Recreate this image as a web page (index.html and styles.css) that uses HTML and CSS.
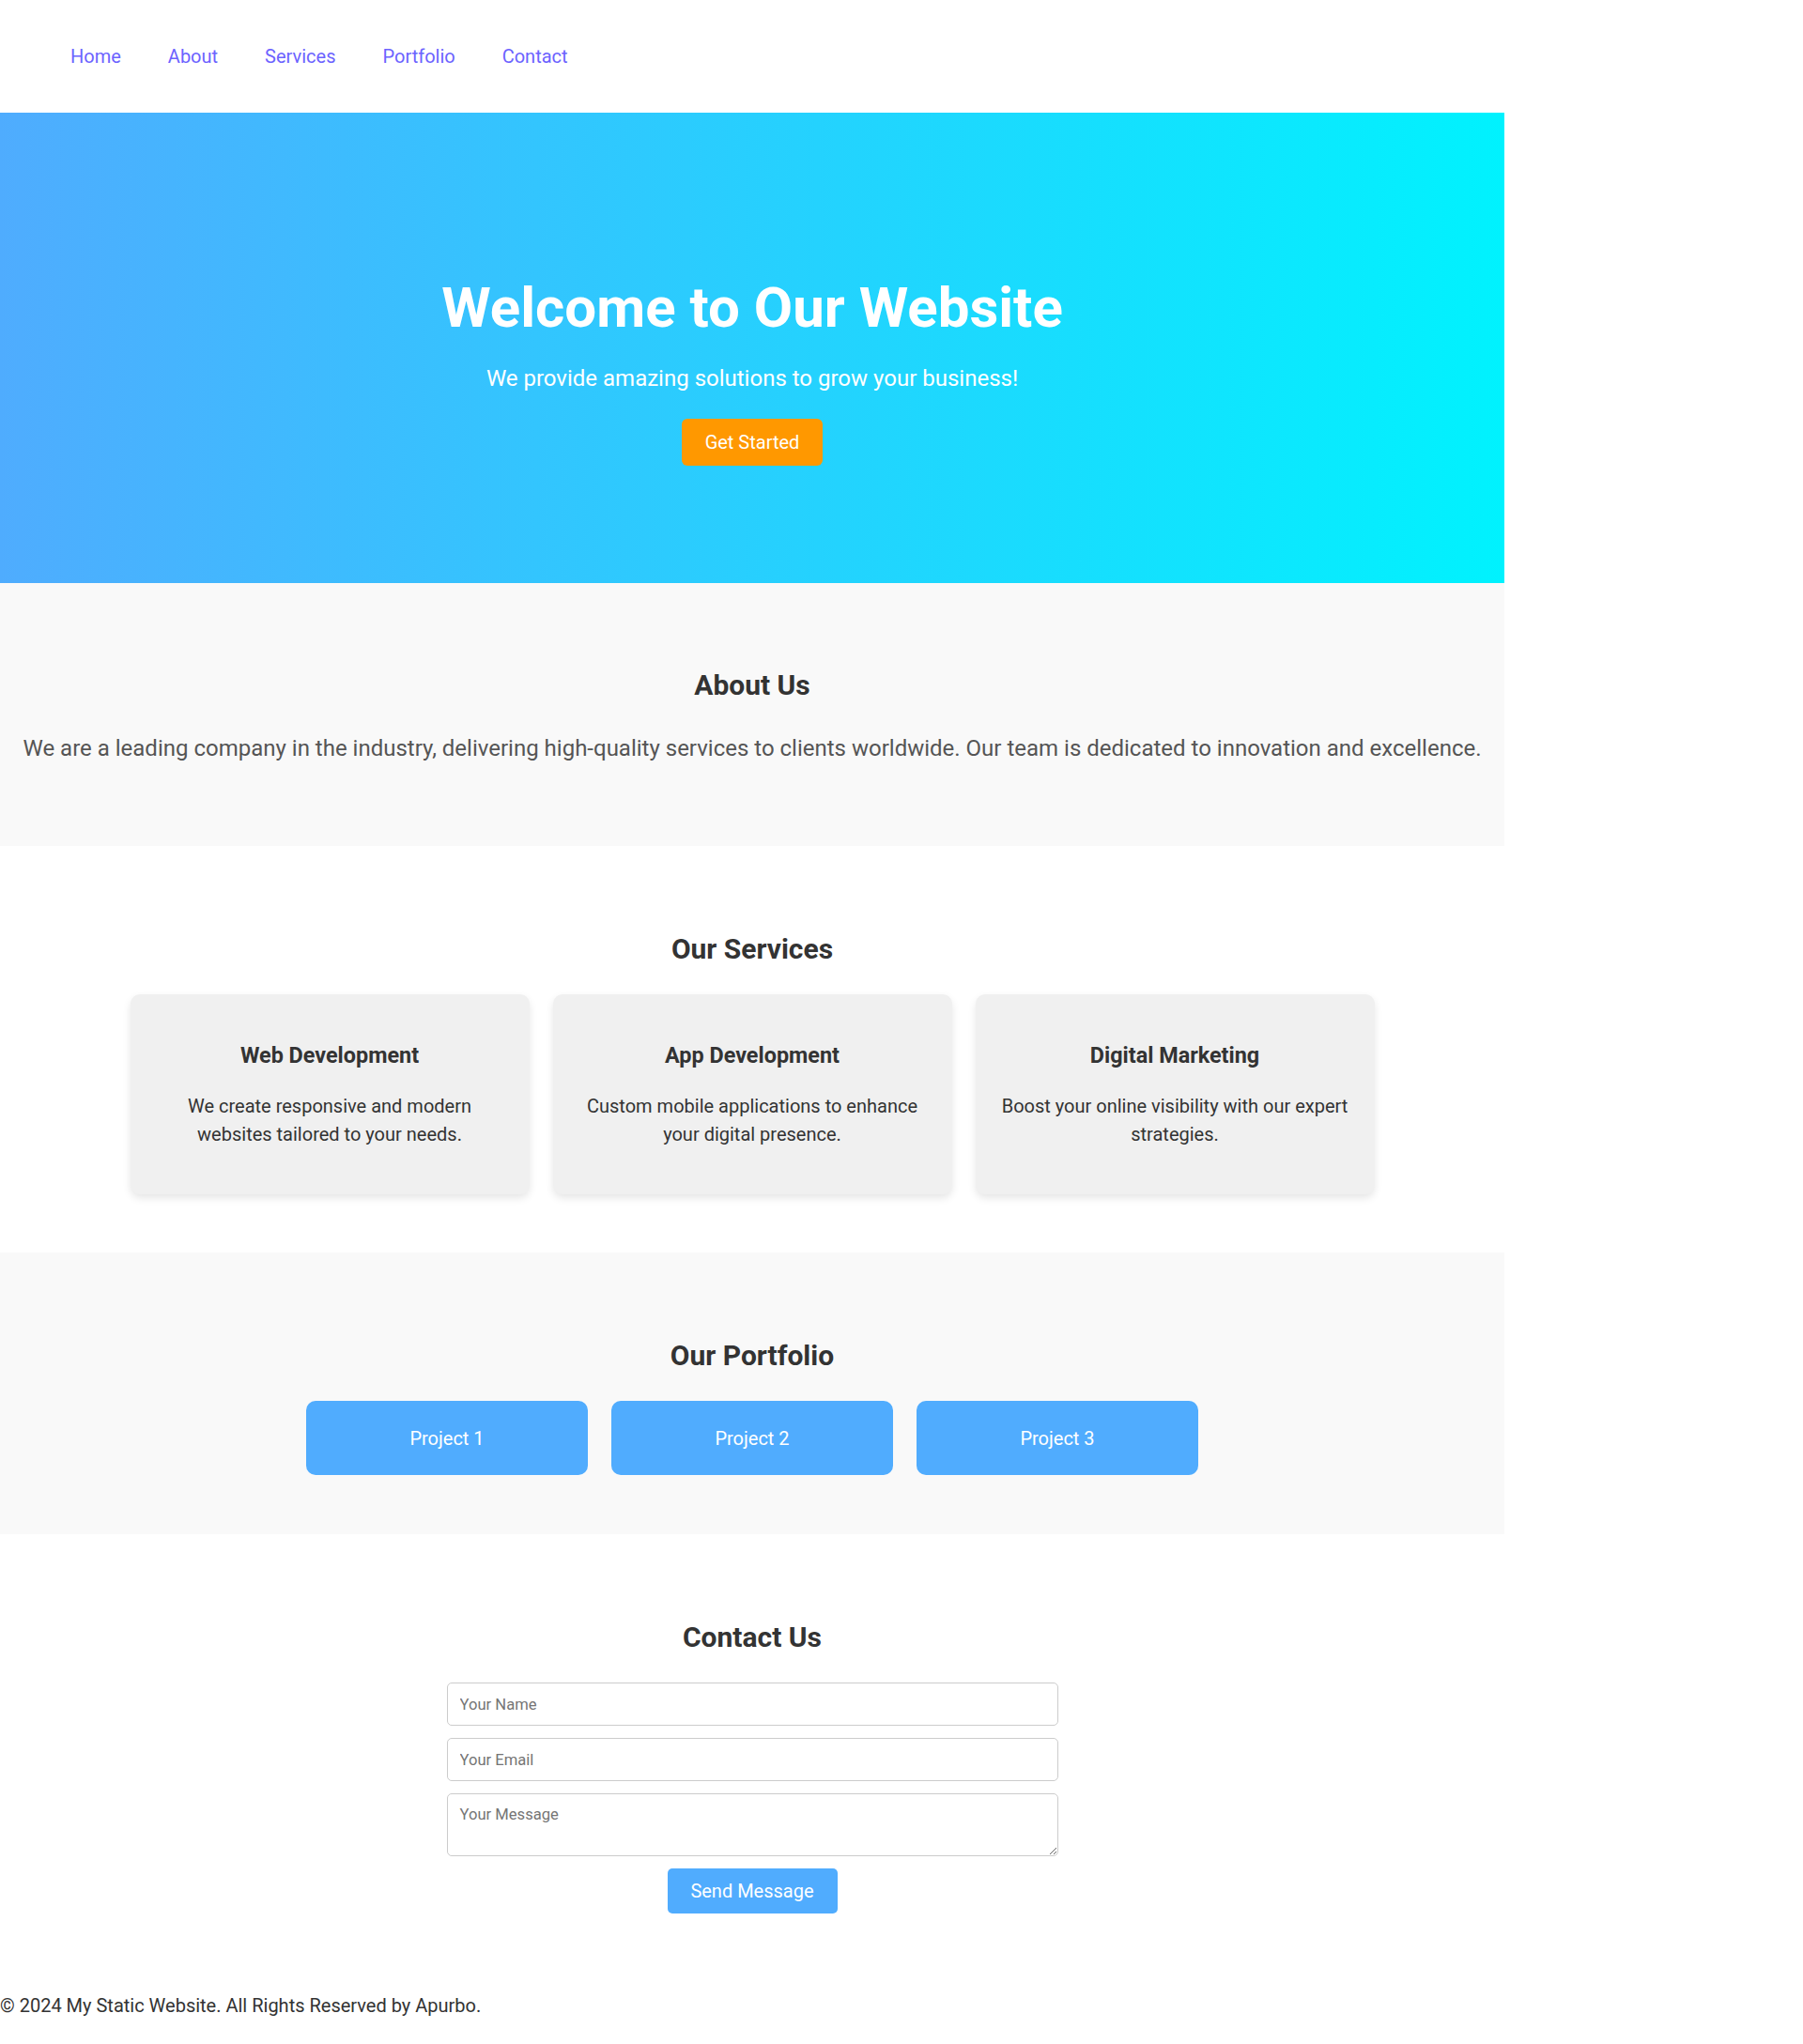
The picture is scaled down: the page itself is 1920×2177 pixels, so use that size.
FILE: index.html
```html
<!DOCTYPE html>
<html lang="en">
<head>
<meta charset="UTF-8">
<title>My Static Website</title>
<link rel="stylesheet" href="styles.css">
</head>
<body>
<div class="page">
  <header class="site-header">
    <nav class="nav">
      <a href="#home">Home</a>
      <a href="#about">About</a>
      <a href="#services">Services</a>
      <a href="#portfolio">Portfolio</a>
      <a href="#contact">Contact</a>
    </nav>
  </header>

  <section class="hero" id="home">
    <h1 class="hero-title">Welcome to Our Website</h1>
    <p class="hero-sub">We provide amazing solutions to grow your business!</p>
    <button class="btn-orange">Get Started</button>
  </section>

  <section class="about" id="about">
    <h2 class="section-title">About Us</h2>
    <p class="about-text">We are a leading company in the industry, delivering high-quality services to clients worldwide. Our team is dedicated to innovation and excellence.</p>
  </section>

  <section class="services" id="services">
    <h2 class="section-title">Our Services</h2>
    <div class="cards">
      <div class="card">
        <h3 class="card-title">Web Development</h3>
        <p class="card-text">We create responsive and modern websites tailored to your needs.</p>
      </div>
      <div class="card">
        <h3 class="card-title">App Development</h3>
        <p class="card-text">Custom mobile applications to enhance your digital presence.</p>
      </div>
      <div class="card">
        <h3 class="card-title">Digital Marketing</h3>
        <p class="card-text">Boost your online visibility with our expert strategies.</p>
      </div>
    </div>
  </section>

  <section class="portfolio" id="portfolio">
    <h2 class="section-title">Our Portfolio</h2>
    <div class="projects">
      <div class="project">Project 1</div>
      <div class="project">Project 2</div>
      <div class="project">Project 3</div>
    </div>
  </section>

  <section class="contact" id="contact">
    <h2 class="section-title">Contact Us</h2>
    <form class="contact-form">
      <input class="field" type="text" placeholder="Your Name">
      <input class="field" type="email" placeholder="Your Email">
      <textarea class="field field-area" placeholder="Your Message"></textarea>
      <button type="button" class="btn-blue">Send Message</button>
    </form>
  </section>

  <footer class="footer">
    <p>&copy; 2024 My Static Website. All Rights Reserved by Apurbo.</p>
  </footer>
</div>
</body>
</html>
```

FILE: styles.css
```css
* {
  box-sizing: border-box;
}

html, body {
  margin: 0;
  padding: 0;
  background: #ffffff;
}

body {
  font-family: Roboto, "Liberation Sans", Arial, sans-serif;
  color: #333333;
}

.page {
  width: 1602px;
}

/* Header / nav */
.site-header {
  height: 120px;
  display: flex;
  align-items: center;
  padding-left: 75px;
}

.nav {
  display: flex;
  gap: 50px;
}

.nav a {
  color: #6c63ff;
  text-decoration: none;
  font-size: 20px;
  line-height: 24px;
}

/* Hero */
.hero {
  height: 501px;
  background: linear-gradient(to right, #4facfe 0%, #00f2fe 100%);
  color: #ffffff;
  display: flex;
  flex-direction: column;
  align-items: center;
  padding-top: 172px;
}

.hero-title {
  margin: 0;
  font-size: 60px;
  line-height: 72px;
  font-weight: 700;
}

.hero-sub {
  margin: 24px 0 0;
  font-size: 24px;
  line-height: 30px;
}

.btn-orange {
  margin-top: 28px;
  width: 150px;
  height: 50px;
  border: none;
  border-radius: 6px;
  background: #ff9800;
  color: #ffffff;
  font-family: inherit;
  font-size: 20px;
}

/* Sections */
.section-title {
  margin: 0;
  font-size: 30px;
  line-height: 36px;
  font-weight: 700;
  color: #333333;
  text-align: center;
}

.about {
  height: 280px;
  background: #f9f9f9;
  padding-top: 91px;
  text-align: center;
}

.about-text {
  margin: 35px 0 0;
  font-size: 24px;
  line-height: 29px;
  color: #555555;
}

.services {
  height: 433px;
  padding-top: 92px;
}

.cards {
  margin-top: 30px;
  display: flex;
  justify-content: center;
  gap: 25px;
}

.card {
  width: 425px;
  height: 213px;
  background: #f0f0f0;
  border-radius: 10px;
  box-shadow: 0 4px 8px rgba(0, 0, 0, 0.1);
  text-align: center;
  padding: 51px 25px 0;
}

.card-title {
  margin: 0;
  font-size: 23.4px;
  line-height: 28px;
  font-weight: 700;
  color: #333333;
}

.card-text {
  margin: 25px 0 0;
  font-size: 20px;
  line-height: 30px;
  color: #333333;
}

.portfolio {
  height: 300px;
  background: #f9f9f9;
  padding-top: 92px;
}

.projects {
  margin-top: 30px;
  display: flex;
  justify-content: center;
  gap: 25px;
}

.project {
  width: 300px;
  height: 79px;
  background: #50acfe;
  border-radius: 10px;
  color: #ffffff;
  font-size: 20px;
  display: flex;
  align-items: center;
  justify-content: center;
}

.contact {
  padding-top: 92px;
}

.contact-form {
  width: 651px;
  margin: 30px auto 0;
  display: flex;
  flex-direction: column;
  align-items: center;
}

.field {
  width: 100%;
  height: 46px;
  margin-bottom: 13px;
  border: 1.5px solid #cccccc;
  border-radius: 5px;
  padding: 0 13px;
  font-family: inherit;
  font-size: 16.6px;
  color: #333333;
  background: #ffffff;
}

.field::placeholder {
  color: #757575;
}

.field-area {
  height: 67px;
  padding-top: 12px;
  resize: vertical;
}

.btn-blue {
  width: 181px;
  height: 48px;
  border: none;
  border-radius: 5px;
  background: #50acfe;
  color: #ffffff;
  font-family: inherit;
  font-size: 20px;
}

.footer {
  padding-top: 86px;
}

.footer p {
  margin: 0;
  font-size: 20px;
  line-height: 24px;
  color: #333333;
}
```
